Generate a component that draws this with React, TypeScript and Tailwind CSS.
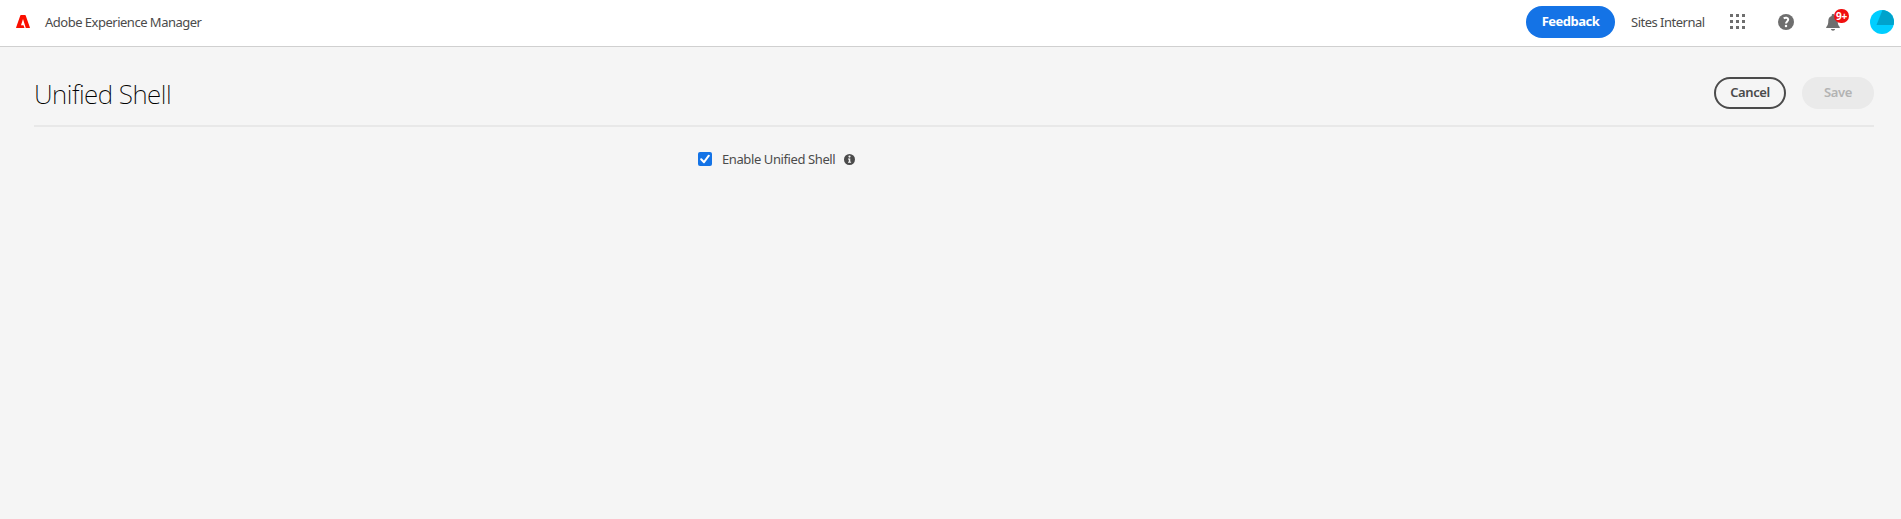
function AdobeLogo() {
  return (
    <svg className="h-[13px] w-[14px]" viewBox="0 0 14 13">
      <path d="M4.900 0h4.200c.3 0 .5.200.6.500L13.900 12.400c.1.4-.1.6-.4.6H.500c-.4 0-.5-.3-.4-.6L4.300.500c.1-.3.3-.500.6-.500z" fill="#fa0f00" />
      <path d="M7 4L9.800 13H8.500L7.500 10.200H5z" fill="#fff" />
    </svg>
  );
}

function AppGrid() {
  return (
    <svg className="h-[15px] w-[15px]" viewBox="0 0 15 15" fill="#6e6e6e" shapeRendering="crispEdges">
      {[0, 6, 12].map((y) => [0, 6, 12].map((x) => <rect key={`${x}-${y}`} x={x} y={y} width="3" height="3" />))}
    </svg>
  );
}

function HelpIcon() {
  return (
    <svg className="h-4 w-4" viewBox="0 0 16 16">
      <circle cx="8" cy="8" r="8" fill="#6e6e6e" />
      <path d="M5.700 4.300c1.500-1 4.500-.9 4.500 1.300 0 1.800-2.200 2.100-2.200 4" fill="none" stroke="#fff" strokeWidth="2" />
      <circle cx="8" cy="12" r="1.250" fill="#fff" />
    </svg>
  );
}

function BellIcon() {
  return (
    <svg className="h-[17px] w-[14px]" viewBox="0 0 14 17" fill="#6e6e6e">
      <path d="M7 0c.8 0 1.300.5 1.300 1.300v.6C10.700 2.500 11.700 4.500 11.700 7c0 3 .6 4.500 2 6 .4.500.300 1-.3 1H.6c-.6 0-.7-.5-.3-1 1.400-1.500 2-3 2-6 0-2.500 1-4.500 3.400-5.100v-.6C5.700.5 6.200 0 7 0zM5 15h4c0 1.100-.9 1.700-2 1.700S5 16.100 5 15z" />
    </svg>
  );
}

function Avatar() {
  return (
    <svg className="h-6 w-6" viewBox="0 0 24 24">
      <clipPath id="avatar-clip">
        <circle cx="12" cy="12" r="12" />
      </clipPath>
      <g clipPath="url(#avatar-clip)">
        <path d="M0 0h24v24H0z" fill="#00ceff" />
        <path d="M12.500 0H24v15H6.500z" fill="#00a3cc" />
      </g>
    </svg>
  );
}

function InfoIcon() {
  return (
    <svg className="h-[11px] w-[11px]" viewBox="0 0 11 11">
      <circle cx="5.500" cy="5.500" r="5.500" fill="#4b4b4b" />
      <circle cx="5.500" cy="2.600" r="1.100" fill="#f5f5f5" />
      <path d="M4 4.500h2.300V7.800h.8v1H4v-1h.8V5.500H4z" fill="#f5f5f5" />
    </svg>
  );
}

export default function App() {
  return (
    <div className="flex h-[519px] flex-col bg-[#f5f5f5] font-['Noto_Sans',sans-serif] text-[13px] text-[#4b4b4b]">
      <header className="flex h-[47px] shrink-0 items-start justify-between border-b border-[#d0d0d0] bg-white pr-[7px] pl-4">
        <div className="flex h-[44px] items-center">
          <div className="pb-[2px]">
            <AdobeLogo />
          </div>
          <span className="ml-[15px] pt-[2px] tracking-[-0.5px] whitespace-nowrap">Adobe Experience Manager</span>
        </div>
        <div className="flex h-[44px] items-center">
          <button className="flex h-8 w-[89px] items-center justify-center rounded-full bg-[#1473e6] pb-px text-[13px] font-bold tracking-[-0.5px] text-white">
            Feedback
          </button>
          <span className="ml-4 w-[74px] pt-[2px] tracking-[-0.5px] whitespace-nowrap">Sites Internal</span>
          <div className="ml-[25px] pb-px">
            <AppGrid />
          </div>
          <div className="ml-[33px]">
            <HelpIcon />
          </div>
          <div className="relative ml-8 pt-px">
            <BellIcon />
            <span className="absolute -top-[4px] left-2 flex h-[14px] w-[15px] items-center justify-center rounded-full bg-[#f00f0f] text-[10px] font-bold tracking-[-0.3px] text-white">
              9+
            </span>
          </div>
          <div className="ml-[30px]">
            <Avatar />
          </div>
        </div>
      </header>
      <main className="flex flex-col pr-[27px] pl-[34px]">
        <div className="flex h-20 items-center justify-between border-b-2 border-[#e8e8e8] pt-[14px]">
          <h1 className="pt-[2px] text-[26px] font-extralight tracking-[-0.5px] whitespace-nowrap text-black">Unified Shell</h1>
          <div className="flex gap-4">
            <button className="h-8 w-[72px] rounded-full border-2 border-[#4b4b4b] pb-px leading-none font-semibold tracking-[-0.4px]">Cancel</button>
            <button className="h-8 w-[72px] rounded-full bg-[#eaeaea] pb-px leading-none font-semibold tracking-[-0.4px] text-[#b3b3b3]" disabled>
              Save
            </button>
          </div>
        </div>
        <label className="mt-[22px] ml-[664px] flex h-5 items-center">
          <span className="flex h-[14px] w-[14px] items-center justify-center rounded-[2px] bg-[#1473e6]">
            <svg className="h-[10px] w-[10px]" viewBox="0 0 10 10" fill="none" stroke="#fff" strokeWidth="2" strokeLinecap="round" strokeLinejoin="round">
              <path d="M1.200 5.200L4 8.200L8.800 1.700" />
            </svg>
          </span>
          <span className="ml-[10px] w-[114px] pt-[2px] tracking-[-0.4px] whitespace-nowrap">Enable Unified Shell</span>
          <span className="ml-2">
            <InfoIcon />
          </span>
        </label>
      </main>
    </div>
  );
}
